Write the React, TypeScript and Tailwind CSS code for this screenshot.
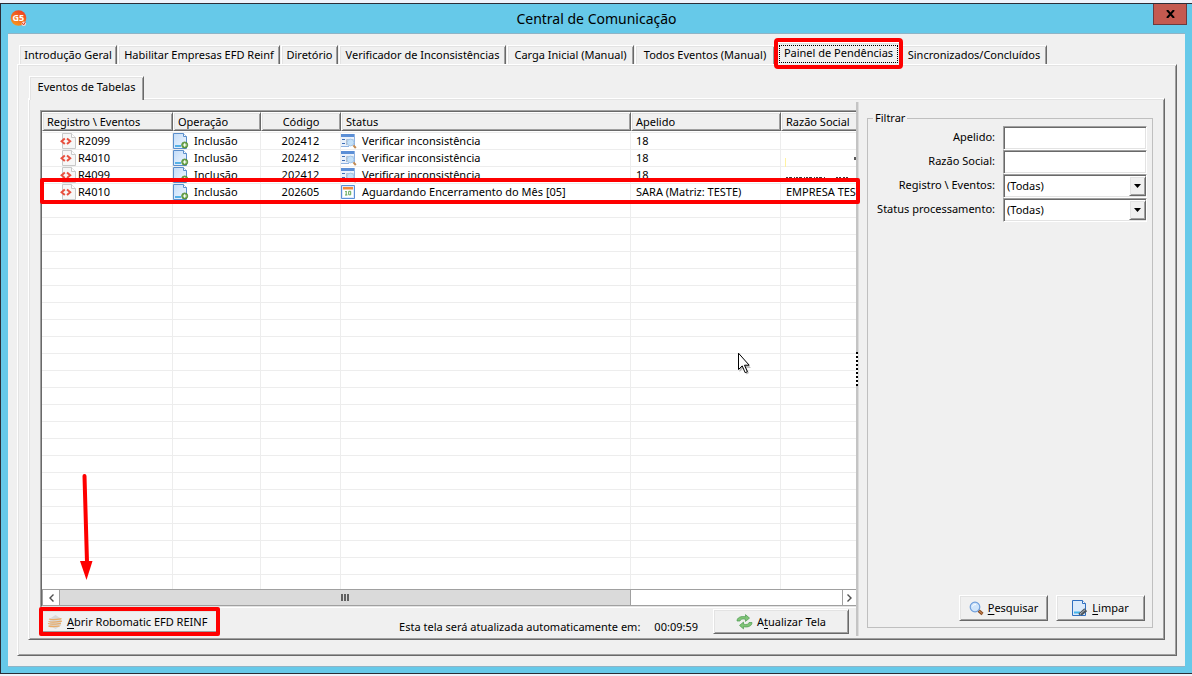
import { useState } from "react";
import type { ReactNode } from "react";

const tabs = [
  { label: "Introdução Geral", width: "w-[99px]" },
  { label: "Habilitar Empresas EFD Reinf", width: "w-[163px]" },
  { label: "Diretório", width: "w-[58px]" },
  { label: "Verificador de Inconsistências", width: "w-[168px]" },
  { label: "Carga Inicial (Manual)", width: "w-[128px]" },
  { label: "Todos Eventos (Manual)", width: "w-[141px]" },
  { label: "Painel de Pendências", width: "w-[125px]" },
  { label: "Sincronizados/Concluídos", width: "w-[147px]" },
];

type Row = {
  registro: string;
  codigo: string;
  status: string;
  waiting?: boolean;
  apelido: string;
  razao: string;
};

const rows: Row[] = [
  { registro: "R2099", codigo: "202412", status: "Verificar inconsistência", apelido: "18", razao: "" },
  { registro: "R4010", codigo: "202412", status: "Verificar inconsistência", apelido: "18", razao: "" },
  { registro: "R4099", codigo: "202412", status: "Verificar inconsistência", apelido: "18", razao: "" },
  {
    registro: "R4010",
    codigo: "202605",
    status: "Aguardando Encerramento do Mês [05]",
    waiting: true,
    apelido: "SARA (Matriz: TESTE)",
    razao: "EMPRESA TES",
  },
];

const columns = [
  { label: "Registro \\ Eventos", width: "w-[131px]" },
  { label: "Operação", width: "w-[88px]" },
  { label: "Código", width: "w-[80px]", center: true },
  { label: "Status", width: "w-[290px]" },
  { label: "Apelido", width: "w-[150px]" },
  { label: "Razão Social", width: "w-[400px]" },
];

const blankRows = Array.from({ length: 40 }, (_, i) => i);

function AppLogo() {
  return (
    <svg width="18" height="18" viewBox="0 0 18 18" aria-hidden="true">
      <defs>
        <linearGradient id="logo" x1="0" y1="1" x2="0.6" y2="0">
          <stop offset="0" stopColor="#f9a11b" />
          <stop offset="1" stopColor="#ee4423" />
        </linearGradient>
      </defs>
      <circle cx="8.5" cy="8" r="7.8" fill="url(#logo)" />
      <text x="2.6" y="11" fontSize="9" fontWeight="700" fill="#fff" fontFamily="Open Sans, sans-serif">
        G5
      </text>
      <circle cx="13.8" cy="13.8" r="2.3" fill="#fbd9d0" />
      <path d="M12 12.6l1.6 2.4 1.8-3" stroke="#d6402a" strokeWidth="1" fill="none" />
    </svg>
  );
}

function CodeIcon() {
  return (
    <svg width="16" height="16" viewBox="0 0 16 16" className="shrink-0" aria-hidden="true">
      <path d="M2.5 .5h9l4 4v11h-13z" fill="#f7f7f7" stroke="#c9c9c9" />
      <path d="M11.5 .5v4h4" fill="#fff" stroke="#c9c9c9" />
      <path d="M4.8 5.6L1.6 8.3l3.2 2.7M7 5.6l3.2 2.7L7 11" fill="none" stroke="#e8503f" strokeWidth="2" />
    </svg>
  );
}

function DocAddIcon() {
  return (
    <svg width="16" height="16" viewBox="0 0 16 16" className="shrink-0" aria-hidden="true">
      <defs>
        <linearGradient id="page" x1="0" y1="0" x2="1" y2="1">
          <stop offset="0" stopColor="#c3dcf8" />
          <stop offset="1" stopColor="#f2f8ff" />
        </linearGradient>
      </defs>
      <path d="M.5 .5h10l3 3v12H.5z" fill="url(#page)" stroke="#5b8fcc" />
      <path d="M10.5 .5v3h3" fill="#fff" stroke="#5b8fcc" />
      <path d="M2 13h6" stroke="#55b0e6" strokeWidth="2" />
      <circle cx="11.7" cy="12" r="3.1" fill="#6aa548" stroke="#4a8331" strokeWidth=".7" />
      <path d="M11.7 10.200v3.600M9.900 12h3.600" stroke="#fff" strokeWidth="1.200" />
    </svg>
  );
}

function InspectIcon() {
  return (
    <svg width="16" height="16" viewBox="0 0 16 16" className="shrink-0" aria-hidden="true">
      <path d="M0 1h14v12H0z" fill="#e9f1fb" />
      <path d="M0 1h14v3H0z" fill="#5b8fd6" />
      <path d="M13.5 1v12M0 13.5h8" stroke="#8fb3e2" />
      <path d="M1 6.5h3M1 10.5h3" stroke="#3f6fb5" />
      <path d="M5.500 12V6.500h7" stroke="#b4bfcc" fill="none" />
      <circle cx="9.5" cy="9.500" r="3.400" fill="#c3e0f8" stroke="#a5c6e6" />
      <path d="M12.4 12.400l2.400 2.600" stroke="#c28a52" strokeWidth="2" />
    </svg>
  );
}

function CalendarIcon() {
  return (
    <svg width="16" height="16" viewBox="0 0 16 16" className="shrink-0" aria-hidden="true">
      <path d="M.5 1.5h13v13H.5z" fill="#dce9fa" stroke="#5b8fd6" />
      <path d="M2 3h10v10H2z" fill="#fff" />
      <path d="M2 3h10v2.500H2z" fill="#f08a3c" />
      <path d="M5.200 7v4M4.300 7.500h1M4 11h2.400M7.700 7.300h2v3.500h-2z" stroke="#5fa653" fill="none" />
    </svg>
  );
}

function RobotIcon() {
  return (
    <svg width="16" height="16" viewBox="0 0 16 16" aria-hidden="true">
      <path d="M8.500 1l5.500 3.500v7L8.500 15 3 11.500v-7z" fill="#d9d9d9" />
      <path
        d="M2 5c4 1.300 9 .3 12.500-.3M1.500 7.500c4 1.300 9 .3 13.500-.3M1 9.500c4 1.300 8 .5 13-.2M1.500 12c4 1 7 .5 11 0"
        fill="none"
        stroke="#e9ab66"
        strokeWidth="1.300"
      />
    </svg>
  );
}

function RefreshIcon() {
  return (
    <svg width="17" height="16" viewBox="0 0 17 16" aria-hidden="true">
      <path d="M1 7C1 3.500 5 1.800 9.500 2.800V.6l4 3.500-4 3.300V5.300C6.500 4.600 4.500 5 4 7z" fill="#7fc476" stroke="#4c9a50" strokeWidth=".7" />
      <path d="M16 8.500c0 3.500-4 5.200-8.500 4.200v2.200l-4-3.500 4-3.300v2.100c3 .7 5 .3 5.500-1.700z" fill="#7fc476" stroke="#4c9a50" strokeWidth=".7" />
    </svg>
  );
}

function SearchIcon() {
  return (
    <svg width="15" height="15" viewBox="0 0 15 15" aria-hidden="true">
      <path d="M9.500 9.500l4 3.500" stroke="#8a4b20" strokeWidth="3" />
      <path d="M9.800 9.700l3.500 3" stroke="#d99a63" strokeWidth="1" />
      <circle cx="6" cy="6" r="4.800" fill="#cfe4fa" stroke="#6f9fdc" strokeWidth="1.200" />
      <path d="M3.500 5.500c.5-1.500 2-2.200 3.500-1.800" fill="none" stroke="#fff" />
    </svg>
  );
}

function ClearIcon() {
  return (
    <svg width="16" height="16" viewBox="0 0 16 16" aria-hidden="true">
      <path d="M.5 .5h10l3 3v12H.5z" fill="#dcebfb" stroke="#2f6fc0" />
      <path d="M10.500 .5v3h3" fill="#fff" stroke="#2f6fc0" />
      <path d="M2 12.500h6" stroke="#45b5ea" strokeWidth="2" />
      <path d="M7 14.500L13 9M9 15l5.500-4.500" stroke="#4d565e" strokeWidth="2" />
      <path d="M8 14l5-4.200" stroke="#c9d2da" strokeWidth=".8" />
    </svg>
  );
}

const raised =
  "flex items-center justify-center border border-t-white border-l-white border-r-[#696969] border-b-[#696969] bg-[#f0f0f0] shadow-[inset_1px_1px_0_#e3e3e3,inset_-1px_-1px_0_#a0a0a0]";
const sunken =
  "h-6 w-36 border border-t-[#a0a0a0] border-l-[#a0a0a0] border-r-white border-b-white bg-white shadow-[inset_1px_1px_0_#696969,inset_-1px_-1px_0_#e3e3e3]";
const panel =
  "border border-t-white border-l-white border-r-[#696969] border-b-[#696969] shadow-[inset_1px_1px_0_#e3e3e3,inset_-1px_-1px_0_#a0a0a0]";
const tabEdge =
  "border-t border-l border-r border-t-white border-l-white border-r-[#696969] bg-[#f0f0f0] shadow-[inset_1px_1px_0_#e3e3e3,inset_-1px_0_0_#a0a0a0]";

function Field({ id, label, children }: { id: string; label: string; children: ReactNode }) {
  return (
    <div className="flex items-center justify-end gap-2">
      <label htmlFor={id} className="pb-0.5 whitespace-nowrap">
        {label}
      </label>
      {children}
    </div>
  );
}

function Choice({ id }: { id: string }) {
  return (
    <div className="relative">
      <select id={id} className={`${sunken} appearance-none rounded-none pl-[3px] outline-none`}>
        <option>(Todas)</option>
      </select>
      <span className={`${raised} pointer-events-none absolute top-0.5 right-px h-5 w-[17px]`}>
        <svg width="7" height="4" viewBox="0 0 7 4" aria-hidden="true">
          <path d="M0 0h7L3.500 4z" fill="#000" />
        </svg>
      </span>
    </div>
  );
}

function EventsTable() {
  const cell = "h-[17px] overflow-hidden border-r border-b border-[#ededed] p-0 whitespace-nowrap";
  return (
    <table className="w-[1139px] table-fixed border-separate border-spacing-0">
      <thead>
        <tr>
          {columns.map((c) => (
            <th
              key={c.label}
              scope="col"
              className={`${c.width} h-[19px] border border-t-white border-l-white border-r-[#696969] border-b-[#696969] bg-[#f0f0f0] py-0 pr-1 pl-1 font-normal shadow-[inset_1px_1px_0_#e3e3e3,inset_-1px_-1px_0_#a0a0a0] ${c.center ? "text-center" : "text-left"}`}
            >
              {c.label}
            </th>
          ))}
        </tr>
      </thead>
      <tbody>
        <tr aria-hidden="true">
          <td colSpan={6} className="h-[2px] border-b border-[#ededed] p-0" />
        </tr>
        {rows.map((r, i) => (
          <tr key={i}>
            <td className={cell}>
              <div className="flex h-4 items-center gap-0.5 pl-[18px]">
                <CodeIcon />
                {r.registro}
              </div>
            </td>
            <td className={cell}>
              <div className="flex h-4 items-center gap-[5px]">
                <DocAddIcon />
                Inclusão
              </div>
            </td>
            <td className={`${cell} text-center`}>{r.codigo}</td>
            <td className={cell}>
              <div className="flex h-4 items-center gap-[5px]">
                {r.waiting ? <CalendarIcon /> : <InspectIcon />}
                {r.status}
              </div>
            </td>
            <td className={`${cell} pl-[5px]`}>{r.apelido}</td>
            <td className={`${cell} pl-[5px]`}>{r.razao}</td>
          </tr>
        ))}
        {blankRows.map((n) => (
          <tr key={n} aria-hidden="true">
            {columns.map((c) => (
              <td key={c.label} className={cell} />
            ))}
          </tr>
        ))}
      </tbody>
    </table>
  );
}

function ScrollBar() {
  return (
    <div className="flex h-[17px] shrink-0 border border-r-0 border-[#a0a0a0] bg-white">
      <button type="button" aria-label="Rolar para a esquerda" className="flex w-4 items-center justify-center">
        <svg width="5" height="8" viewBox="0 0 5 8" aria-hidden="true">
          <path d="M4.500 .5L1 4l3.500 3.500" fill="none" stroke="#505050" strokeWidth="1.400" />
        </svg>
      </button>
      <div className="flex flex-1">
        <div className="flex w-[73%] items-center justify-center gap-px border-x border-[#a0a0a0] bg-[#dadada]">
          <span className="h-[7px] w-0.5 bg-[#606060]" />
          <span className="h-[7px] w-0.5 bg-[#606060]" />
          <span className="h-[7px] w-0.5 bg-[#606060]" />
        </div>
      </div>
      <button
        type="button"
        aria-label="Rolar para a direita"
        className="flex w-[14px] items-center justify-center border-l border-[#a0a0a0]"
      >
        <svg width="5" height="8" viewBox="0 0 5 8" aria-hidden="true">
          <path d="M.5 .5L4 4 .5 7.500" fill="none" stroke="#505050" strokeWidth="1.400" />
        </svg>
      </button>
    </div>
  );
}

export default function App() {
  const [active, setActive] = useState(6);
  return (
    <div className="flex min-h-screen min-w-[1100px] flex-col bg-[#eef3fb] pt-[3px] pb-0.5 font-['Noto_Sans','Open_Sans',sans-serif] text-[11px] leading-4 text-black">
      <div className="flex flex-1 flex-col border-y border-l border-[#2b2d36] bg-[#66c9e9]">
        <header className="relative flex h-[30px] shrink-0 items-center justify-center">
          <span className="absolute top-1.5 left-[9px]">
            <AppLogo />
          </span>
          <h1 className="text-sm leading-5">Central de Comunicação</h1>
          <button
            type="button"
            aria-label="Fechar"
            className="absolute top-0 right-[5px] flex h-[21px] w-[34px] items-center justify-center border border-t-0 border-[#6b3b3f] bg-[#c45a50]"
          >
            <svg width="9" height="8" viewBox="0 0 9 8" aria-hidden="true">
              <path d="M1 0l7 8M8 0L1 8" stroke="#000" strokeWidth="2" />
            </svg>
          </button>
        </header>

        <main className="mr-[7px] mb-[7px] ml-[7px] flex flex-1 flex-col bg-[#f0f0f0] pt-2 pr-2 pb-[10px] pl-[9px] shadow-[0_-1px_0_#8fb4c6,0_1px_0_#8fb4c6]">
          <div role="tablist" className="relative z-10 flex h-[22px] items-end pl-0.5">
            {tabs.map((t, i) => {
              const selected = i === active;
              return (
                <div key={t.label} className={`${t.width} relative flex ${selected ? "z-10 -mb-0.5" : ""}`}>
                  <button
                    type="button"
                    role="tab"
                    aria-selected={selected}
                    onClick={() => setActive(i)}
                    className={`${tabEdge} flex flex-1 justify-center whitespace-nowrap ${selected ? "h-6 pt-0.5" : "mr-px h-[19px] pt-px"}`}
                  >
                    <span
                      className={
                        selected
                          ? "flex h-[18px] w-[119px] items-start justify-center border border-dotted border-black leading-[14px]"
                          : ""
                      }
                    >
                      {t.label}
                    </span>
                  </button>
                  {selected && (
                    <span className="pointer-events-none absolute -inset-x-0.5 -top-1 -bottom-[3px] rounded-sm border-4 border-[#fe0000]" />
                  )}
                </div>
              );
            })}
          </div>

          <div className={`${panel} flex flex-1 flex-col pt-[11px] pr-[11px] pb-[15px] pl-[10px]`}>
            <div role="tablist" className="relative z-10 -mb-0.5 flex h-6 pl-px">
              <button
                type="button"
                role="tab"
                aria-selected="true"
                className={`${tabEdge} flex w-[115px] items-start justify-center pt-0.5`}
              >
                Eventos de Tabelas
              </button>
            </div>

            <div className={`${panel} flex flex-1 p-px`}>
              <section className="flex min-w-0 flex-1 flex-col pt-[10px] pl-[10px]">
                <div className="relative flex flex-1 flex-col">
                  <div className="flex flex-1 flex-col border-t border-b border-l border-t-[#a0a0a0] border-b-white border-l-[#a0a0a0]">
                    <div className="flex flex-1 flex-col border-t border-b border-l border-t-[#696969] border-b-[#e3e3e3] border-l-[#696969] bg-white">
                      <div className="min-h-40 flex-[1_1_0] overflow-hidden contain-size">
                        <EventsTable />
                      </div>
                      <ScrollBar />
                    </div>
                  </div>
                  <svg className="absolute top-[47px] right-0" width="72" height="24" viewBox="0 0 72 24" aria-hidden="true">
                    <path d="M1.500 1v9" stroke="#fff2a0" />
                    <path d="M71 -1v4" stroke="#222" strokeWidth="1.500" />
                    <path d="M2 20.500h40M52 20.500h5M59 20.500h5" stroke="#4a3a3a" strokeDasharray="2 1 3 2 1 1" />
                  </svg>
                  <span className="pointer-events-none absolute top-[68px] -right-1 left-0 h-[26px] rounded-xs border-4 border-[#fe0000]" />
                  <svg className="absolute bottom-[27px] left-[39px]" width="14" height="107" viewBox="0 0 14 107" aria-hidden="true">
                    <path d="M5.500 2L8 88" stroke="#fe0000" strokeWidth="4" strokeLinecap="round" />
                    <path d="M1 87h12.500L7.500 106z" fill="#fe0000" />
                  </svg>
                  <svg className="absolute top-[242px] right-[105px]" width="14" height="24" viewBox="0 0 14 24" aria-hidden="true">
                    <path d="M2.500 3v17l4-4 3 6.500 2.500-1.500-2.500-5h4.500z" fill="#000" opacity=".25" />
                    <path d="M1.500 1.200v16.300l3.700-3.600 3 6.800 2.200-1-2.900-6.500h4.700z" fill="#fff" stroke="#000" />
                  </svg>
                </div>
                <footer className="flex h-[30px] shrink-0 items-start pt-px">
                  <span className="relative mt-px ml-px">
                    <button type="button" className={`${raised} h-[23px] w-[177px] justify-start gap-1 pr-1 pl-[5px] whitespace-nowrap`}>
                      <RobotIcon />
                      <span>
                        <u className="underline-offset-2">A</u>brir Robomatic EFD REINF
                      </span>
                    </button>
                    <span className="pointer-events-none absolute -inset-x-0.5 -top-[3px] -bottom-[3px] rounded-xs border-4 border-[#fe0000]" />
                  </span>
                  <p className="mt-[10px] ml-auto">Esta tela será atualizada automaticamente em:</p>
                  <time className="mt-[10px] mr-[15px] ml-[14px]">00:09:59</time>
                  <button type="button" className={`${raised} mr-[7px] h-[25px] w-[136px] gap-1`}>
                    <RefreshIcon />
                    <span>
                      A<u className="underline-offset-2">t</u>ualizar Tela
                    </span>
                  </button>
                </footer>
              </section>

              <div className="my-0.5 flex w-[3px] items-center border-r border-[#dcdcdc] bg-[#c4c4c4]">
                <span className="-ml-px h-[34px] w-[3px] bg-[repeating-linear-gradient(#000_0_2px,#fff_2px_4px)]" />
              </div>

              <aside className="flex w-[304px] shrink-0 flex-col pt-[10px] pr-[10px] pb-[10px] pl-2">
                <fieldset className="flex min-w-0 flex-1 flex-col border border-[#bfbfbf] px-[5px] pb-1.5">
                  <legend className="px-0.5">Filtrar</legend>
                  <Field id="apelido" label="Apelido:">
                    <input id="apelido" type="text" className={`${sunken} px-1 outline-none`} />
                  </Field>
                  <Field id="razao" label="Razão Social:">
                    <input id="razao" type="text" className={`${sunken} px-1 outline-none`} />
                  </Field>
                  <Field id="registro" label="Registro \ Eventos:">
                    <Choice id="registro" />
                  </Field>
                  <Field id="status" label="Status processamento:">
                    <Choice id="status" />
                  </Field>
                  <div className="mt-auto flex justify-end gap-2 pr-0.5">
                    <button type="button" className={`${raised} h-[26px] w-[89px] gap-1`}>
                      <SearchIcon />
                      <span>
                        <u className="underline-offset-2">P</u>esquisar
                      </span>
                    </button>
                    <button type="button" className={`${raised} h-[26px] w-[89px] gap-1`}>
                      <ClearIcon />
                      <span>
                        <u className="underline-offset-2">L</u>impar
                      </span>
                    </button>
                  </div>
                </fieldset>
              </aside>
            </div>
          </div>
        </main>
      </div>
    </div>
  );
}
